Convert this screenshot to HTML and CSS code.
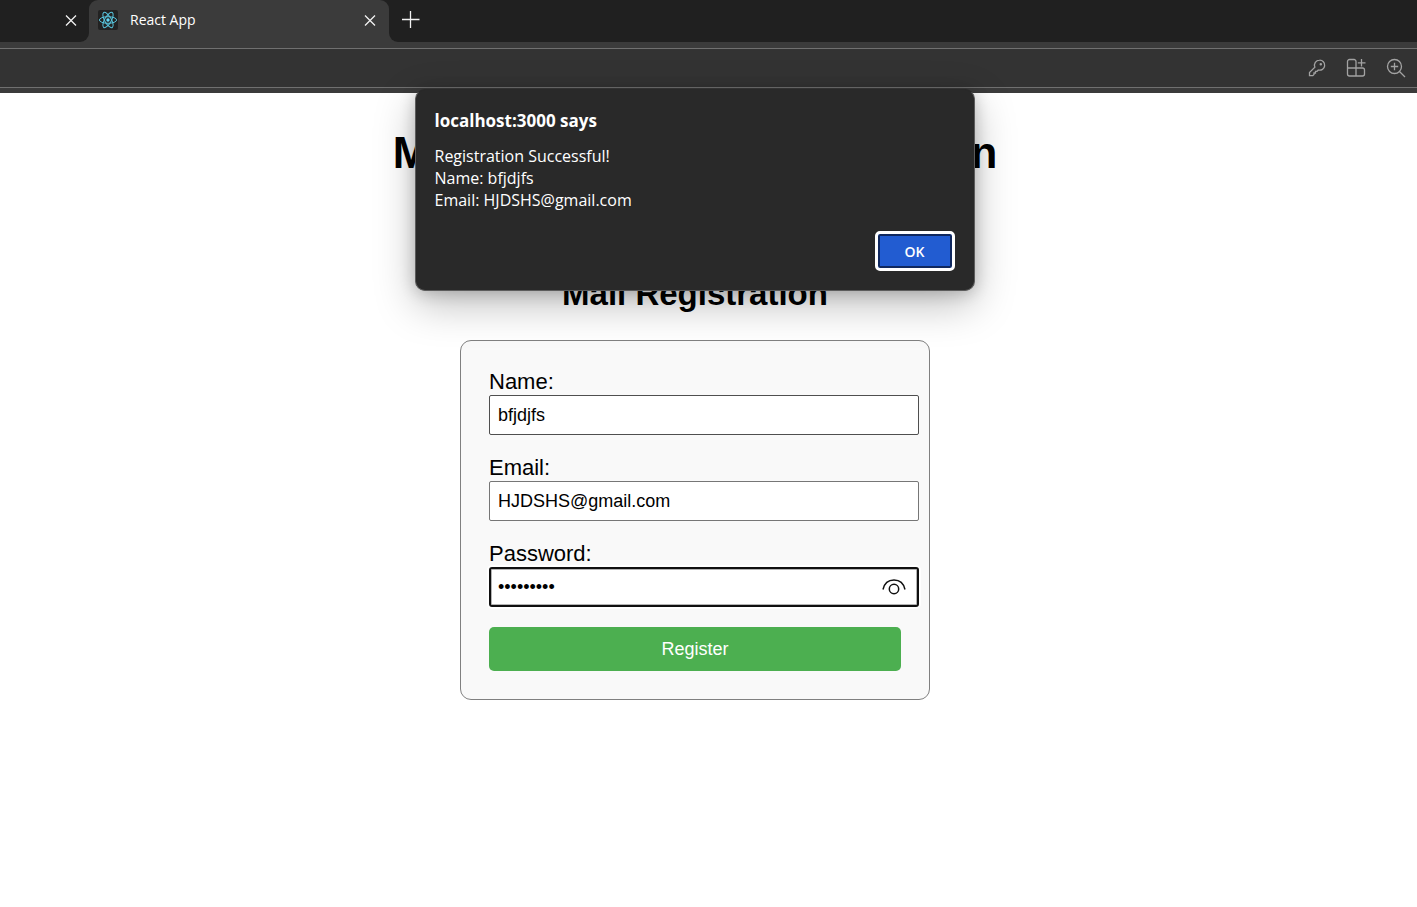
FILE: index.html
```html
<!DOCTYPE html>
<html lang="en">
<head>
<meta charset="utf-8">
<title>React App</title>
<link rel="stylesheet" href="styles.css">
</head>
<body>
<header class="browser">
  <div class="tab-strip">
    <div class="strip-start">
      <button class="icon-button" type="button" aria-label="Close previous tab">
        <svg width="12" height="12" viewBox="0 0 12 12"><path d="M1 1.500l10 10M11 1.500l-10 10"/></svg>
      </button>
    </div>
    <div class="tab-holder">
      <div class="tab">
        <svg class="favicon" width="20" height="20" viewBox="0 0 20 20">
          <rect width="20" height="20" rx="2" fill="#222"/>
          <g fill="none" stroke="#58c4dc" stroke-width="1">
            <ellipse cx="10" cy="10" rx="8.6" ry="3.3"/>
            <ellipse cx="10" cy="10" rx="8.6" ry="3.3" transform="rotate(60 10 10)"/>
            <ellipse cx="10" cy="10" rx="8.6" ry="3.3" transform="rotate(120 10 10)"/>
          </g>
          <circle cx="10" cy="10" r="1.7" fill="#61dafb"/>
        </svg>
        <span class="tab-title">React App</span>
        <button class="icon-button" type="button" aria-label="Close tab">
          <svg width="12" height="12" viewBox="0 0 12 12"><path d="M1 1.500l10 10M11 1.500l-10 10"/></svg>
        </button>
      </div>
    </div>
    <div class="strip-end">
      <button class="icon-button" type="button" aria-label="New tab">
        <svg width="18" height="18" viewBox="0 0 18 18"><path d="M8.500 0v17M0 8.500h17.500"/></svg>
      </button>
    </div>
  </div>
  <div class="toolbar">
    <button class="icon-button" type="button" aria-label="Saved passwords">
      <svg width="18" height="18" viewBox="0 0 18 18"><path d="M11.500 1.200a5 5 0 1 1-1.200 9.800L9 12.300H7.500V14H6v1.400L4.800 16.600H1.500v-3l5.400-5.400A5 5 0 0 1 11.500 1.200z"/><circle cx="12.800" cy="5.200" r=".6"/></svg>
    </button>
    <button class="icon-button" type="button" aria-label="Apps">
      <svg width="20" height="20" viewBox="0 0 20 20"><path d="M10 10V3.500a2 2 0 0 0-2-2H3.500a2 2 0 0 0-2 2v12.500a2 2 0 0 0 2 2h13a2 2 0 0 0 2-2v-4a2 2 0 0 0-2-2h-15M10 10v8M15.500 1v7.500M11.800 4.800h7.700"/></svg>
    </button>
    <button class="icon-button" type="button" aria-label="Zoom">
      <svg width="20" height="20" viewBox="0 0 20 20"><circle cx="8.500" cy="8.500" r="7"/><path d="M13.500 13.500l5.500 5.500M8.500 4.800v7.400M4.800 8.500h7.400"/></svg>
    </button>
  </div>
</header>

<main class="page">
  <h1 class="page-title">Mail Registration Application</h1>
  <h2 class="form-title">Mail Registration</h2>
  <form class="form">
    <div class="field">
      <label class="label" for="name">Name:</label>
      <input class="input input-hover" id="name" type="text" value="bfjdjfs">
    </div>
    <div class="field">
      <label class="label" for="email">Email:</label>
      <input class="input" id="email" type="email" value="HJDSHS@gmail.com">
    </div>
    <div class="field">
      <label class="label" for="password">Password:</label>
      <input class="input input-active" id="password" type="password" value="abcdefghi">
      <button class="reveal" type="button" aria-label="Show password">
        <svg width="24" height="18" viewBox="0 0 24 18"><path d="M1 11.500C2.300 5.500 6.600 2 12 2s9.700 3.500 11 9.500"/><circle cx="12" cy="11" r="4.700"/></svg>
      </button>
    </div>
    <button class="register" type="button">Register</button>
  </form>

  <div class="dialog" role="alertdialog" aria-labelledby="dialog-title">
    <div class="dialog-title" id="dialog-title">localhost:3000 says</div>
    <div class="dialog-text">Registration Successful!<br>Name: bfjdjfs<br>Email: HJDSHS@gmail.com</div>
    <button class="ok" type="button">OK</button>
  </div>
</main>
</body>
</html>
```

FILE: styles.css
```css
* {
  box-sizing: border-box;
}

body {
  margin: 0;
  background: #fff;
  color: #000;
  font-family: "Liberation Sans", Arial, sans-serif;
  font-size: 22px;
}

button {
  font-family: inherit;
  cursor: pointer;
}

/* Browser chrome */
.browser {
  background: #3b3b3b;
  color: #fff;
  font-family: "Open Sans", "Noto Sans", sans-serif;
  padding-bottom: 5px;
}

.tab-strip {
  display: flex;
  height: 42px;
  margin-bottom: 6px;
}

.strip-start,
.strip-end {
  display: flex;
  align-items: center;
  background: #202020;
  padding-bottom: 2px;
}

.strip-start {
  width: 89px;
  justify-content: flex-end;
  padding-right: 12px;
  border-bottom-right-radius: 9px;
}

.strip-end {
  flex: 1;
  padding-left: 13px;
  border-bottom-left-radius: 9px;
}

.tab-holder {
  width: 300px;
  background: #202020;
}

.tab {
  display: flex;
  align-items: center;
  height: 100%;
  padding: 0 13px 2px 9px;
  background: #3b3b3b;
  border-radius: 9px 9px 0 0;
}

.tab-title {
  flex: 1;
  margin-left: 12px;
  font-size: 14px;
  line-height: 20px;
}

.icon-button {
  display: flex;
  padding: 0;
  border: 0;
  background: none;
}

.icon-button svg {
  fill: none;
  stroke: #f2f2f2;
  stroke-width: 1.300;
}

.toolbar {
  display: flex;
  align-items: center;
  justify-content: flex-end;
  gap: 20px;
  height: 40px;
  padding-right: 11px;
  background: #333;
  border-top: 1px solid #707070;
  border-bottom: 1px solid #707070;
}

.toolbar svg {
  stroke: #a3a3a3;
}

/* Page */
.page {
  position: relative;
  display: flex;
  flex-direction: column;
  align-items: center;
  padding: 35px 27px 40px 0;
}

.page-title {
  margin: 0 0 97px;
  font-size: 44px;
  line-height: 50px;
}

.form-title {
  margin: 0 0 27px;
  font-size: 33px;
  line-height: 38px;
}

.form {
  width: 100%;
  max-width: 470px;
  padding: 28px;
  background: #f9f9f9;
  border: 1px solid #808080;
  border-radius: 11px;
}

.field {
  position: relative;
  width: calc(100% + 18px);
  margin-bottom: 20px;
}

.label {
  display: block;
  line-height: 26px;
}

.input {
  display: block;
  width: 100%;
  height: 40px;
  padding: 0 8px;
  background: #fff;
  border: 1px solid #767676;
  border-radius: 2px;
  color: #000;
  font-family: inherit;
  font-size: 18px;
}

.input-hover {
  border-color: #4f4f4f;
}

.input-active {
  padding: 0 7px;
  border: 2px solid #101010;
  border-radius: 3px;
  outline: none;
  box-shadow: inset 0 0 0 1px #b4b4b4, 0 0 0 2px #fff;
}

.reveal {
  position: absolute;
  right: 13px;
  bottom: 11px;
  display: flex;
  padding: 0;
  border: 0;
  background: none;
}

.reveal svg {
  fill: none;
  stroke: #101010;
  stroke-width: 1.500;
}

.register {
  display: block;
  width: 100%;
  height: 44px;
  border: 0;
  border-radius: 5px;
  background: #4caf50;
  color: #fff;
  font-size: 18px;
}

/* Alert laid over the page */
.dialog {
  position: absolute;
  top: -4px;
  left: calc(50% - 14px);
  transform: translateX(-50%);
  display: flex;
  flex-direction: column;
  width: 560px;
  padding: 19px;
  background: #292929;
  border: 1px solid #5c5c5c;
  border-top-color: #292929;
  border-radius: 10px;
  box-shadow: 0 14px 40px rgba(0, 0, 0, 0.25), 0 2px 16px rgba(0, 0, 0, 0.2);
  color: #fff;
  font-family: "Open Sans", "Noto Sans", sans-serif;
}

.dialog-title {
  margin-bottom: 12px;
  font-size: 17px;
  font-weight: 700;
  line-height: 24px;
}

.dialog-text {
  margin-bottom: 20px;
  font-size: 16px;
  line-height: 22px;
}

.ok {
  align-self: flex-end;
  width: 80px;
  height: 40px;
  border: 3px solid #fff;
  border-radius: 5px;
  background: #225cd1;
  box-shadow: inset 0 0 0 2px #10285e;
  color: #fff;
  font-size: 14px;
  font-weight: 600;
}
```
